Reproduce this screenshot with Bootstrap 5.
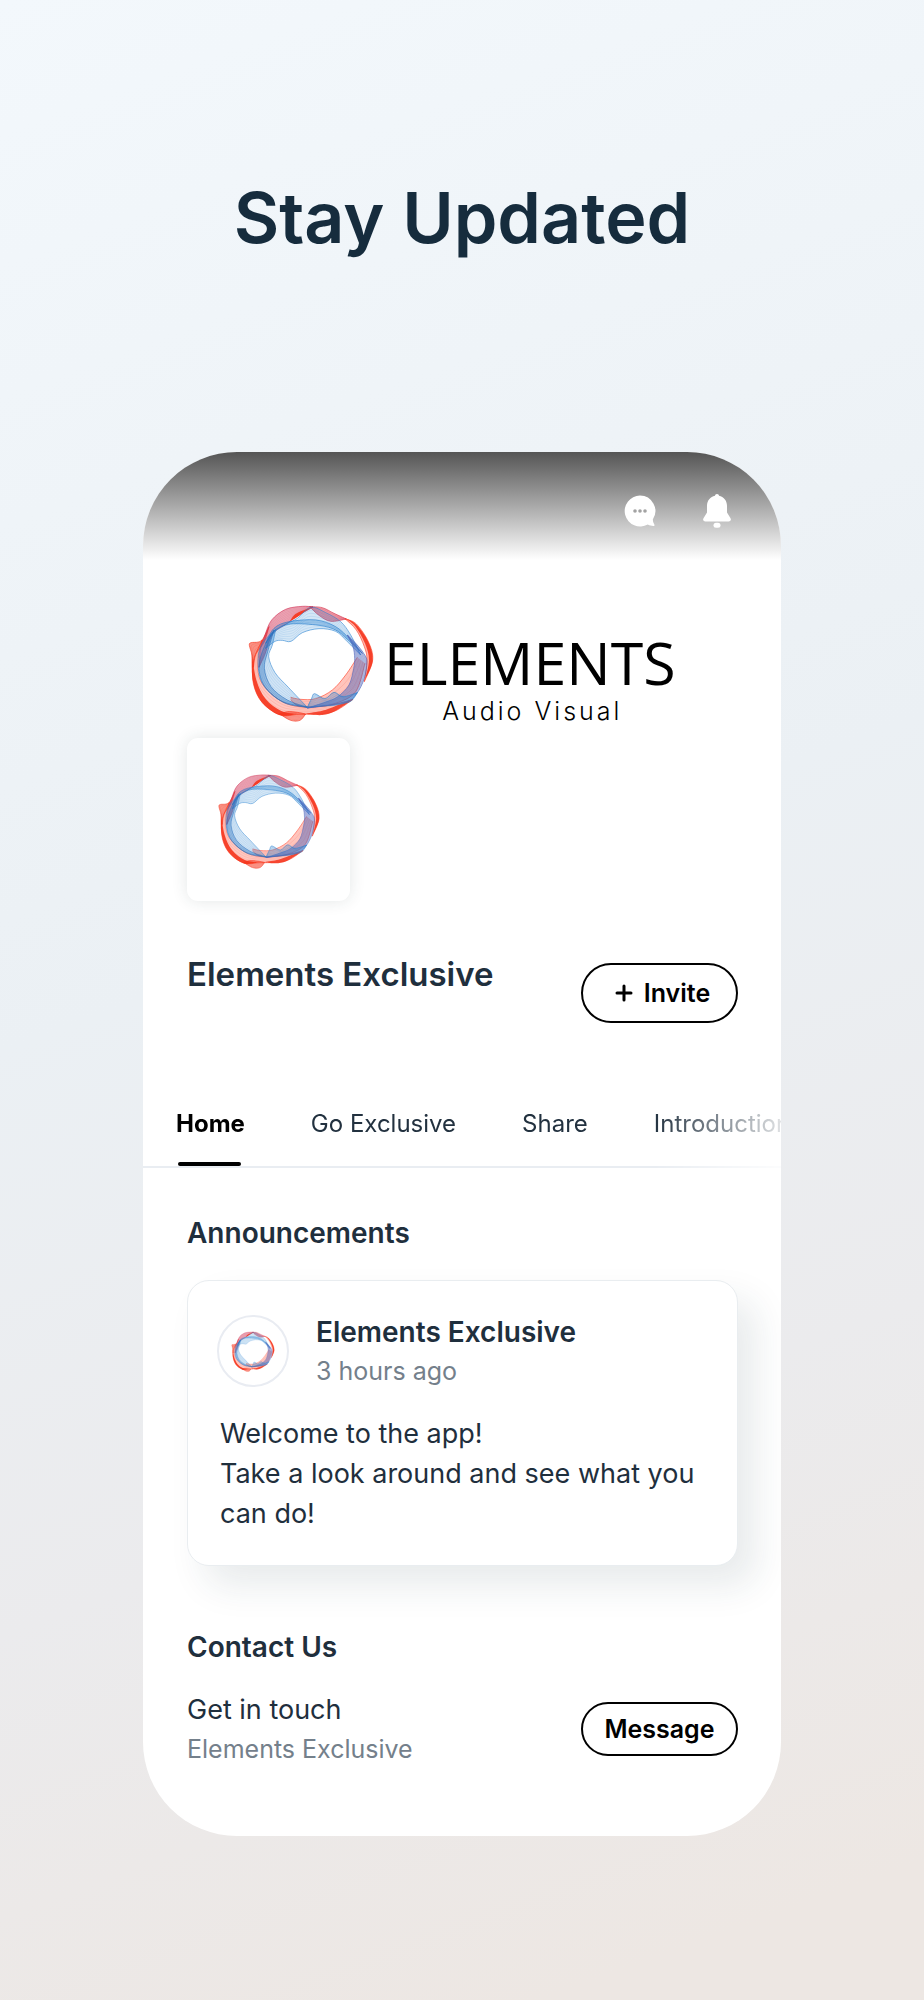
<!DOCTYPE html>
<html lang="en">
<head>
<meta charset="utf-8">
<meta name="viewport" content="width=device-width, initial-scale=1">
<title>Stay Updated</title>
<link href="https://cdn.jsdelivr.net/npm/bootstrap@5.3.0/dist/css/bootstrap.min.css" rel="stylesheet">
<style>
  body {
    font-family: Inter, "Liberation Sans", sans-serif;
    color: #1f2f3d;
    min-height: 100vh;
    background: linear-gradient(160deg, #f3f8fc 0%, #ebf0f4 45%, #ebebed 70%, #ede7e3 94%, #ede7e3 100%);
  }
  .headline { font-size: 70px; line-height: 80px; font-weight: 600; color: #162c3d; padding: 178px 0 194px; }
  .phone { max-width: 638px; border-radius: 94px; background: #fff; margin-bottom: 165px; }
  .topbar { height: 108px; padding: 10px 48px 0; gap: 45px; background: linear-gradient(#555 0%, #a9a9a9 50%, #e0e0e0 82%, #fff 100%); }
  .topbar .btn { width: 32px; height: 34px; }
  .brand { padding: 44px 0 0 104px; height: 178px; }
  .brand-ring { width: 128px; height: 118px; }
  .brand-text { margin-left: 9px; padding-top: 26px; }
  .brand-name { font-family: "Open Sans", sans-serif; font-size: 59px; line-height: 64px; color: #000; }
  .brand-sub { font-size: 25px; line-height: 34px; font-weight: 300; letter-spacing: 3px; color: #000; padding-left: 5px; }
  .gutter { padding-left: 44px; padding-right: 43px; }
  .logo-tile { width: 163px; height: 163px; border-radius: 11px; background: #fff; box-shadow: 0 0 16px rgba(30, 60, 60, .12); padding-top: 2px; }
  .logo-tile svg { width: 104px; height: 96px; }
  .app-row { padding-top: 49px; }
  .app-name { font-size: 33px; line-height: 40px; font-weight: 600; }
  .pill { width: 157px; padding: 10px 0; border: 2px solid #000; border-radius: 30px; font-size: 25px; line-height: 30px; font-weight: 600; color: #000; background: #fff; }
  .pill-tall { padding: 13px 0 13px 6px; gap: 11px; margin-top: 13px; }
  .tabs { margin-top: 86px; padding: 0 33px; gap: 66px; border-bottom: 2px solid #e9edf2; box-shadow: 0 4px 6px rgba(30, 50, 60, .03);
    -webkit-mask-image: linear-gradient(90deg, #000 80%, rgba(0,0,0,.15) 100%); mask-image: linear-gradient(90deg, #000 80%, rgba(0,0,0,.15) 100%); }
  .tabs .nav-link { position: relative; font-size: 24px; line-height: 30px; padding: 0 0 27px; color: #22313f; }
  .tabs .nav-link.active { font-weight: 700; color: #000; }
  .tabs .nav-link.active::after { content: ""; position: absolute; left: 2px; right: 4px; bottom: 0; height: 4px; border-radius: 2px; background: #000; }
  .section-title { font-size: 28px; line-height: 34px; font-weight: 600; }
  .post { margin-top: 30px; border: 1px solid #e9edf0; border-radius: 22px; padding: 31px 32px; background: #fff; box-shadow: 18px 20px 36px rgba(30, 60, 70, .1); }
  .post-head { gap: 27px; }
  .post-avatar { width: 72px; height: 72px; border: 2px solid #e9ecf2; margin-left: -3px; }
  .post-avatar svg { width: 44px; height: 41px; }
  .body-line { font-size: 27px; line-height: 40px; }
  .author { font-size: 28px; line-height: 40px; font-weight: 600; }
  .muted-line { font-size: 25px; line-height: 38px; color: #74808b; }
  .contact { padding-top: 64px; padding-bottom: 68px; }
  .contact-row { margin-top: 26px; }
</style>
</head>
<body>
<svg width="0" height="0" class="position-absolute" aria-hidden="true">
  <symbol id="ring" viewBox="84 72 384 354"></symbol>
</svg>

<h1 class="headline text-center m-0">Stay Updated</h1>

<main class="phone mx-auto overflow-hidden">
  <header class="topbar d-flex align-items-center justify-content-end">
    <button class="btn p-0 border-0 d-flex" aria-label="Messages">
      <svg width="32" height="34" viewBox="0 0 32 34"><path fill="#fff" d="M16 1.500a15.500 15.500 0 1 0 7.800 29c2 1.100 4.200 1.500 6 1.400 .8-.1 1-.8.500-1.400a9 9 0 0 1-1.500-5A15.500 15.500 0 0 0 16 1.500z"/><g fill="#a3a3a3"><circle cx="11" cy="17" r="1.800"/><circle cx="16" cy="17" r="1.800"/><circle cx="21" cy="17" r="1.800"/></g></svg>
    </button>
    <button class="btn p-0 border-0 d-flex" aria-label="Notifications">
      <svg width="32" height="34" viewBox="0 0 32 34"><path fill="#fff" d="M16 0c1.200 0 1.900.8 2 1.700 4.600 1 8 4.800 8 10.100v6.600l3.500 5.800c1 1.900 0 3.300-1.800 3.300H4.300c-1.800 0-2.800-1.400-1.800-3.300L6 18.400v-6.600C6 6.500 9.400 2.700 14 1.700 14.100.8 14.800 0 16 0z"/><rect x="12.500" y="28.800" width="7" height="5" rx="2.500" fill="#fff"/></svg>
    </button>
  </header>

  <section class="brand d-flex">
    <svg class="brand-ring flex-shrink-0" role="img" aria-label="Elements logo"><use href="#ring"/></svg>
    <div class="brand-text text-center">
      <div class="brand-name">ELEMENTS</div>
      <div class="brand-sub">Audio Visual</div>
    </div>
  </section>

  <section class="gutter">
    <div class="logo-tile position-relative d-flex align-items-center justify-content-center">
      <svg aria-hidden="true"><use href="#ring"/></svg>
    </div>
    <div class="app-row d-flex justify-content-between align-items-start">
      <h2 class="app-name m-0 mt-1">Elements Exclusive</h2>
      <button class="btn pill pill-tall d-flex align-items-center justify-content-center">
        <svg width="18" height="18" viewBox="0 0 18 18" aria-hidden="true"><path d="M9 2v14M2 9h14" stroke="#000" stroke-width="3" stroke-linecap="round"/></svg>
        Invite
      </button>
    </div>
  </section>

  <nav class="nav tabs flex-nowrap text-nowrap overflow-hidden">
    <a class="nav-link active" href="#home" aria-current="page">Home</a>
    <a class="nav-link" href="#go">Go Exclusive</a>
    <a class="nav-link" href="#share">Share</a>
    <a class="nav-link" href="#intro">Introduction</a>
  </nav>

  <section class="gutter pt-5" id="home">
    <h3 class="section-title m-0">Announcements</h3>
    <article class="post">
      <div class="post-head d-flex align-items-center mb-4">
        <div class="post-avatar rounded-circle d-flex align-items-center justify-content-center flex-shrink-0">
          <svg aria-hidden="true"><use href="#ring"/></svg>
        </div>
        <div>
          <div class="author">Elements Exclusive</div>
          <div class="muted-line">3 hours ago</div>
        </div>
      </div>
      <p class="body-line m-0">Welcome to the app!<br>Take a look around and see what you can do!</p>
    </article>
  </section>

  <section class="gutter contact">
    <h3 class="section-title m-0">Contact Us</h3>
    <div class="contact-row d-flex justify-content-between align-items-center">
      <div>
        <div class="body-line">Get in touch</div>
        <div class="muted-line">Elements Exclusive</div>
      </div>
      <button class="btn pill">Message</button>
    </div>
  </section>
</main>

<script src="https://cdn.jsdelivr.net/npm/bootstrap@5.3.0/dist/js/bootstrap.bundle.min.js"></script>
<script>
  // The ring is woven from ribbons: each one is a fill between two edges
  // plus a number of fine strands interpolated between them.
  const ribbons = [
    // pink body, left and bottom
    { c: '#ff3a20', f: .28, n: 5, a: [[130,180],[104,240],[103,310],[130,368],[185,405],[240,403],[300,402],[350,392],[402,358]], b: [[130,180],[118,235],[120,290],[145,330],[190,365],[240,380],[300,380],[350,372],[402,358]] },
    { c: '#f5341c', f: .9, n: 0, a: [[98,215],[101,300],[125,362],[180,405],[235,402]], b: [[98,215],[112,300],[140,357],[187,393],[235,402]] },
    { c: '#f5341c', f: .85, n: 0, a: [[262,402],[310,405],[350,392],[402,358]], b: [[262,400],[310,392],[345,380],[402,358]] },
    // pink body, lower right
    { c: '#ff3a20', f: .3, n: 4, a: [[215,352],[245,358],[290,356],[340,330],[380,285],[415,232]], b: [[215,360],[240,378],[290,380],[350,370],[410,335],[438,250]] },
    // left spike
    { c: '#f5341c', f: .55, n: 4, a: [[103,262],[99,225],[91,196],[96,188],[118,186],[132,176],[150,140]], b: [[103,262],[107,235],[112,220],[120,208],[128,198],[138,180],[150,140]] },
    // upper left mauve
    { c: '#d02c50', f: .42, n: 9, a: [[120,262],[124,210],[138,165],[158,120],[200,88],[250,79],[282,81]], b: [[120,262],[138,222],[152,180],[168,154],[202,132],[235,108],[282,81]] },
    { c: '#f5341c', f: .9, n: 0, a: [[212,125],[225,106],[245,94],[282,80]], b: [[212,125],[234,112],[253,98],[282,80]] },
    // bottom nub
    { c: '#f5341c', f: .5, n: 6, a: [[182,402],[205,395],[235,397],[260,402]], b: [[182,402],[215,421],[243,421],[260,402]] },
    // top right mauve
    { c: '#d8304a', f: .5, n: 6, a: [[272,80],[310,83],[345,100],[382,117]], b: [[272,80],[300,106],[335,124],[382,117]] },
    // right crescent
    { c: '#ff3a20', f: .35, n: 3, a: [[378,116],[412,132],[448,185],[461,240],[436,305]], b: [[378,116],[412,150],[436,200],[444,240],[436,305]] },
    { c: '#f5341c', f: .9, n: 0, a: [[378,114],[412,134],[448,185],[461,242],[438,300]], b: [[378,114],[408,138],[438,190],[450,240],[438,300]] },
    // blue, top
    { c: '#2f86d2', f: .2, n: 8, a: [[140,205],[160,158],[195,135],[235,115],[275,82],[320,98],[365,125],[395,165],[425,225]], b: [[140,205],[168,184],[190,181],[216,184],[250,158],[300,146],[350,154],[385,185],[425,225]] },
    { c: '#1f7acb', f: .22, n: 5, a: [[140,190],[165,145],[210,125],[290,120],[350,140],[395,180],[430,220]], b: [[140,190],[170,152],[215,132],[300,136],[350,150],[385,178],[430,220]] },
    // blue, left and bottom
    { c: '#2f86d2', f: .22, n: 8, a: [[170,148],[130,190],[117,240],[130,310],[185,362],[265,382]], b: [[170,148],[160,195],[149,230],[168,278],[208,322],[265,382]] },
    { c: '#2a70bd', f: .34, n: 3, a: [[165,150],[136,200],[120,260],[138,320],[195,368],[265,382]], b: [[165,150],[146,215],[136,265],[156,320],[205,360],[265,382]] },
    // violet, right
    { c: '#4b62ba', f: .42, n: 9, a: [[385,165],[412,192],[434,220],[444,245],[436,295],[412,342],[375,368],[265,384]], b: [[385,165],[402,200],[407,235],[404,265],[390,315],[356,350],[320,366],[265,384]] },
    // blue peaks, bottom
    { c: '#2a80cf', f: .3, n: 7, a: [[265,382],[278,355],[287,341],[318,356],[345,337],[372,350],[415,338]], b: [[265,382],[290,380],[315,378],[345,376],[375,370],[398,362],[415,338]] }
  ];
  const curve = p => p.slice(0, -1).map((q, i) => {
    const a = p[i - 1] || q, b = p[i + 1], c = p[i + 2] || b;
    return `C${q[0] + (b[0] - a[0]) / 6} ${q[1] + (b[1] - a[1]) / 6} ${b[0] - (c[0] - q[0]) / 6} ${b[1] - (c[1] - q[1]) / 6} ${b[0]} ${b[1]}`;
  }).join('');
  let out = '';
  for (const r of ribbons) {
    const back = [...r.b].reverse();
    out += `<path d="M${r.a[0]}${curve(r.a)}L${back[0]}${curve(back)}Z" fill="${r.c}" fill-opacity="${r.f}"/>`;
    for (let k = 0; k <= r.n && r.n; k++) {
      const t = k / r.n;
      const m = r.a.map((q, i) => [q[0] + (r.b[i][0] - q[0]) * t, q[1] + (r.b[i][1] - q[1]) * t]);
      const edge = k === 0 || k === r.n;
      out += `<path d="M${m[0]}${curve(m)}" fill="none" stroke="${r.c}" stroke-width="${edge ? 3 : 1}" stroke-opacity="${edge ? .6 : .4}"/>`;
    }
  }
  document.getElementById('ring').innerHTML = out;
</script>
</body>
</html>
